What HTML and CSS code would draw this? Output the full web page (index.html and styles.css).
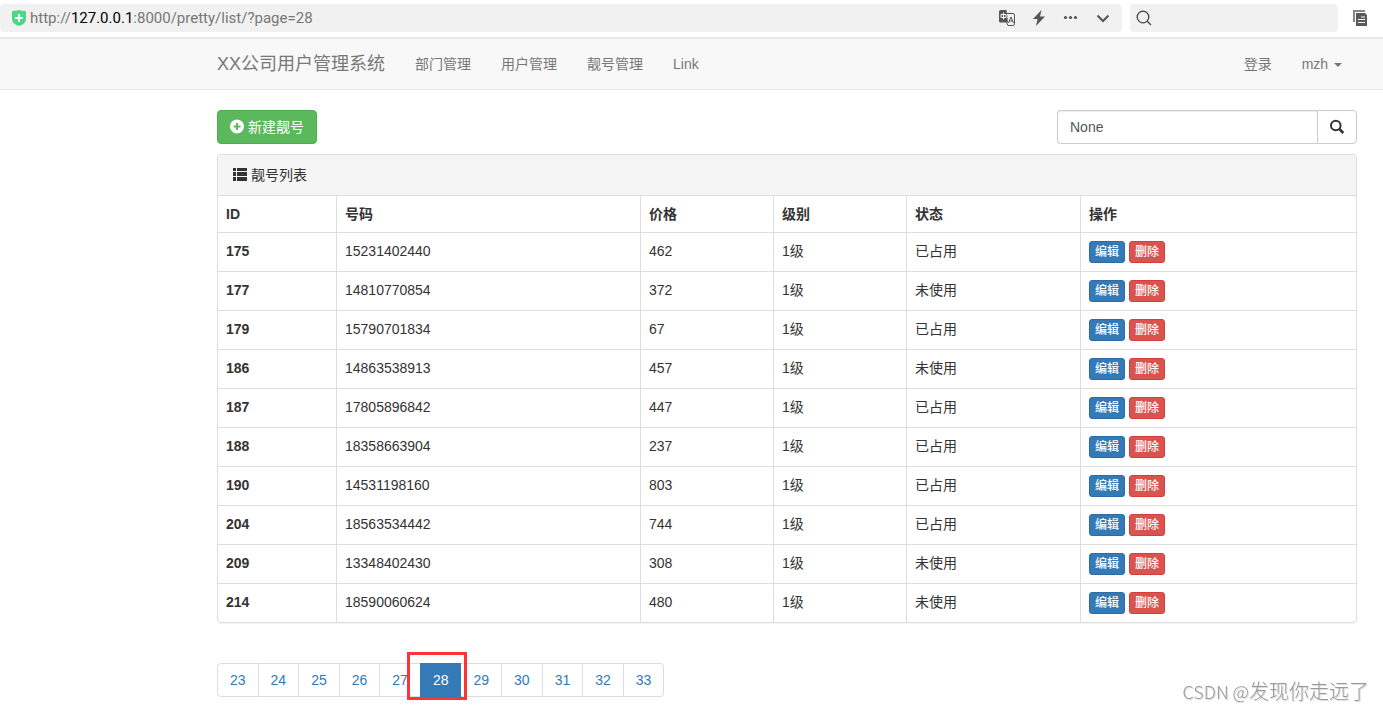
FILE: index.html
```html
<!DOCTYPE html>
<html lang="zh-CN">
<head>
<meta charset="utf-8">
<title>靓号列表</title>
<link rel="stylesheet" href="styles.css">
</head>
<body>
<div class="browser">
  <div class="address">
    <svg class="shield" width="14" height="16" viewBox="0 0 14 16"><path fill="#4bd883" d="M0 1.500Q0 1 1 1 4 1 7 0q3 1 6 1 1 0 1 .500V9q0 5-7 7Q0 14 0 9z"/><path stroke="#fff" stroke-width="2" d="M7 4v8M3 8h8"/></svg>
    <div class="url">http://<b>127.0.0.1</b>:8000/pretty/list/?page=28</div>
    <div class="tools">
      <button type="button" class="tool" aria-label="翻译"><svg width="16" height="16" viewBox="0 0 16 16"><path fill="#555" d="M1.500 0h6L9 12.500H1.500Q0 12.500 0 11V1.500Q0 0 1.500 0z"/><path fill="none" stroke="#fff" d="M2 4.500h5v3H2zM4.500 2.500v7"/><path fill="none" stroke="#555" d="M8 3.500h6q1.500 0 1.500 1.500v9q0 1.500-1.500 1.500H9L7.500 12.500"/><path fill="none" stroke="#555" d="M9.500 13l2.500-6 2.500 6M10.500 11h3"/></svg></button>
      <button type="button" class="tool" aria-label="加速"><svg width="16" height="16" viewBox="0 0 16 16"><path fill="#555" d="M10.500 0L2 9h4.500L5 16 14 6.500H9z"/></svg></button>
      <button type="button" class="tool" aria-label="更多"><svg width="16" height="16" viewBox="0 0 16 16"><g fill="#555"><circle cx="2.500" cy="7.500" r="1.600"/><circle cx="7.500" cy="7.500" r="1.600"/><circle cx="12.500" cy="7.500" r="1.600"/></g></svg></button>
      <button type="button" class="tool" aria-label="展开"><svg width="16" height="16" viewBox="0 0 16 16"><path fill="none" stroke="#555" stroke-width="2" d="M2.500 5.500L8 11l5.500-5.500"/></svg></button>
    </div>
  </div>
  <label class="quick"><svg width="16" height="16" viewBox="0 0 16 16"><g fill="none" stroke="#444" stroke-width="1.300"><circle cx="7" cy="7" r="5.800"/><path d="M11 11l4 4"/></g></svg><input class="quick-input" type="text" aria-label="搜索"></label>
  <button type="button" class="tool pages" aria-label="页面列表"><svg width="16" height="16" viewBox="0 0 16 16"><path fill="none" stroke="#888" stroke-width="2" d="M2 12V1h11"/><path fill="#5a5a5a" d="M4 3h9l2 2v11H4z"/><path stroke="#fff" stroke-width="1.200" d="M9 7h4M6 9.500h7M6 12.500h7"/></svg></button>
</div>

<nav class="navbar">
  <a class="brand" href="#">XX公司用户管理系统</a>
  <a class="nav-link" href="#">部门管理</a>
  <a class="nav-link" href="#">用户管理</a>
  <a class="nav-link" href="#">靓号管理</a>
  <a class="nav-link" href="#">Link</a>
  <a class="nav-link right" href="#">登录</a>
  <a class="nav-link" href="#">mzh <span class="caret"></span></a>
</nav>

<main class="container">
  <div class="toolbar">
    <a class="btn-new" href="#"><svg width="14" height="14" viewBox="0 0 14 14"><circle cx="7" cy="6.500" r="7" fill="#fff"/><path stroke="#5cb85c" stroke-width="2" d="M7 3v7M3.500 6.500h7"/></svg>新建靓号</a>
    <form class="search">
      <input class="search-input" type="text" placeholder="Search for..." value="None" aria-label="搜索靓号">
      <button type="button" class="search-btn" aria-label="搜索"><svg width="14" height="14" viewBox="0 0 14 14"><g fill="none" stroke="#333" stroke-width="2"><circle cx="5.800" cy="5.500" r="4.800"/><path stroke-width="2.600" d="M9 8.700l4.300 4.300"/></g></svg></button>
    </form>
  </div>

  <section class="panel">
    <div class="panel-heading"><svg width="14" height="14" viewBox="0 0 14 14"><path fill="#333" d="M0 0h3v3H0zM4 0h10v3H4zM0 4h3v4H0zM4 4h10v4H4zM0 9h3v4H0zM4 9h10v4H4z"/></svg>靓号列表</div>
    <table class="table">
      <colgroup><col class="c-id"><col class="c-mobile"><col class="c-price"><col class="c-level"><col class="c-status"><col></colgroup>
      <thead><tr><th>ID</th><th>号码</th><th>价格</th><th>级别</th><th>状态</th><th>操作</th></tr></thead>
      <tbody>
        <tr><th>175</th><td>15231402440</td><td>462</td><td>1级</td><td>已占用</td><td><div class="actions"><a class="btn edit" href="#">编辑</a><a class="btn delete" href="#">删除</a></div></td></tr>
        <tr><th>177</th><td>14810770854</td><td>372</td><td>1级</td><td>未使用</td><td><div class="actions"><a class="btn edit" href="#">编辑</a><a class="btn delete" href="#">删除</a></div></td></tr>
        <tr><th>179</th><td>15790701834</td><td>67</td><td>1级</td><td>已占用</td><td><div class="actions"><a class="btn edit" href="#">编辑</a><a class="btn delete" href="#">删除</a></div></td></tr>
        <tr><th>186</th><td>14863538913</td><td>457</td><td>1级</td><td>未使用</td><td><div class="actions"><a class="btn edit" href="#">编辑</a><a class="btn delete" href="#">删除</a></div></td></tr>
        <tr><th>187</th><td>17805896842</td><td>447</td><td>1级</td><td>已占用</td><td><div class="actions"><a class="btn edit" href="#">编辑</a><a class="btn delete" href="#">删除</a></div></td></tr>
        <tr><th>188</th><td>18358663904</td><td>237</td><td>1级</td><td>已占用</td><td><div class="actions"><a class="btn edit" href="#">编辑</a><a class="btn delete" href="#">删除</a></div></td></tr>
        <tr><th>190</th><td>14531198160</td><td>803</td><td>1级</td><td>已占用</td><td><div class="actions"><a class="btn edit" href="#">编辑</a><a class="btn delete" href="#">删除</a></div></td></tr>
        <tr><th>204</th><td>18563534442</td><td>744</td><td>1级</td><td>已占用</td><td><div class="actions"><a class="btn edit" href="#">编辑</a><a class="btn delete" href="#">删除</a></div></td></tr>
        <tr><th>209</th><td>13348402430</td><td>308</td><td>1级</td><td>未使用</td><td><div class="actions"><a class="btn edit" href="#">编辑</a><a class="btn delete" href="#">删除</a></div></td></tr>
        <tr><th>214</th><td>18590060624</td><td>480</td><td>1级</td><td>未使用</td><td><div class="actions"><a class="btn edit" href="#">编辑</a><a class="btn delete" href="#">删除</a></div></td></tr>
      </tbody>
    </table>
  </section>

  <div class="pagination">
    <a class="page" href="#">23</a><a class="page" href="#">24</a><a class="page" href="#">25</a><a class="page" href="#">26</a><a class="page" href="#">27</a><a class="page active" href="#">28<span class="mark"></span></a><a class="page" href="#">29</a><a class="page" href="#">30</a><a class="page" href="#">31</a><a class="page" href="#">32</a><a class="page" href="#">33</a>
  </div>
</main>
<div class="watermark"><span class="site">CSDN @</span>发现你走远了</div>
</body>
</html>
```
FILE: styles.css
```css
* { box-sizing: border-box; }
body {
  margin: 0;
  background: #fff;
  color: #333;
  font: 14px/20px "Liberation Sans", "Noto Sans CJK SC", sans-serif;
}
a { text-decoration: none; }
svg { display: block; flex: none; overflow: visible; }
button { padding: 0; border: 0; background: none; cursor: pointer; }

/* browser bar */
.browser { display: flex; align-items: center; padding: 4px 15px 5px 0; }
.address {
  flex: 1;
  display: flex;
  align-items: center;
  gap: 4px;
  height: 28px;
  padding: 0 11px 0 12px;
  border-radius: 4px;
  background: #f1f1f1;
}
.url { color: #777; font-family: Roboto, "Noto Sans", sans-serif; font-size: 15px; }
.url b { color: #000; font-weight: 400; }
.tools { display: flex; gap: 16px; margin-left: auto; }
.quick {
  display: flex;
  align-items: center;
  width: 208px;
  height: 28px;
  margin-left: 8px;
  padding: 0 6px;
  border-radius: 4px;
  background: #f1f1f1;
}
.quick-input { flex: 1; min-width: 0; border: 0; background: none; outline: 0; }
.pages { margin-left: 14px; }

/* navigation */
.navbar {
  display: flex;
  align-items: center;
  gap: 30px;
  height: 53px;
  padding: 0 41px 0 217px;
  border: solid #e7e7e7;
  border-width: 2px 0 1px;
  background: #f8f8f8;
}
.brand { color: #777; font-size: 18px; }
.nav-link { color: #777; }
.right { margin-left: auto; }
.caret {
  display: inline-block;
  margin-left: 2px;
  vertical-align: middle;
  border: 4px solid transparent;
  border-top-color: #777;
  border-bottom: 0;
}

.container { padding: 20px 26px 12px 217px; }
.toolbar { display: flex; justify-content: space-between; margin-bottom: 10px; }
.btn-new {
  display: flex;
  align-items: center;
  gap: 4px;
  height: 34px;
  padding: 0 12px;
  border: 1px solid #4cae4c;
  border-radius: 4px;
  background: #5cb85c;
  color: #fff;
}
.search { display: flex; width: 300px; }
.search-input {
  flex: 1;
  min-width: 0;
  height: 34px;
  padding: 6px 12px;
  border: 1px solid #ccc;
  border-right: 0;
  border-radius: 4px 0 0 4px;
  box-shadow: inset 0 1px 1px rgba(0, 0, 0, .075);
  color: #555;
  font: inherit;
}
.search-btn {
  display: flex;
  align-items: center;
  justify-content: center;
  width: 40px;
  border: 1px solid #ccc;
  border-radius: 0 4px 4px 0;
  background: #fff;
}

/* list panel */
.panel {
  border: 1px solid #ddd;
  border-radius: 4px;
  box-shadow: 0 1px 1px rgba(0, 0, 0, .05);
  overflow: hidden;
}
.panel-heading {
  display: flex;
  align-items: center;
  gap: 4px;
  padding: 10px 15px;
  background: #f5f5f5;
}
.table { width: 100%; border-spacing: 0; table-layout: fixed; }
.table th, .table td {
  padding: 8px;
  border-top: 1px solid #ddd;
  border-right: 1px solid #ddd;
  text-align: left;
  vertical-align: top;
}
.table th:last-child, .table td:last-child { border-right: 0; }
.c-id { width: 119px; }
.c-mobile { width: 304px; }
.c-price, .c-level { width: 133px; }
.c-status { width: 174px; }
.actions { display: flex; gap: 4px; }
.btn {
  padding: 1px 5px;
  border: 1px solid;
  border-radius: 3px;
  color: #fff;
  font-size: 12px;
  font-weight: 500;
  line-height: 18px;
}
.edit { border-color: #2e6da4; background: #337ab7; }
.delete { border-color: #d43f3a; background: #d9534f; }

/* pagination */
.pagination { display: flex; margin-top: 40px; }
.page {
  position: relative;
  padding: 6px 12px;
  border: 1px solid #ddd;
  border-left-width: 0;
  color: #337ab7;
}
.page:first-child { border-left-width: 1px; border-radius: 4px 0 0 4px; }
.page:last-child { border-radius: 0 4px 4px 0; }
.active {
  z-index: 1;
  margin-left: -1px;
  border-color: #337ab7;
  border-left-width: 1px;
  background: #337ab7;
  color: #fff;
}
.mark {
  position: absolute;
  inset: -12px -7px -4px -14px;
  border: 3px solid #fb3436;
}

.watermark {
  position: fixed;
  right: 14px;
  bottom: 6px;
  color: #999;
  font: 300 20px/26px "Noto Sans CJK SC", sans-serif;
  text-shadow: 1px 1px 0 #ddd;
}
.site { font-size: 18px; }
```
